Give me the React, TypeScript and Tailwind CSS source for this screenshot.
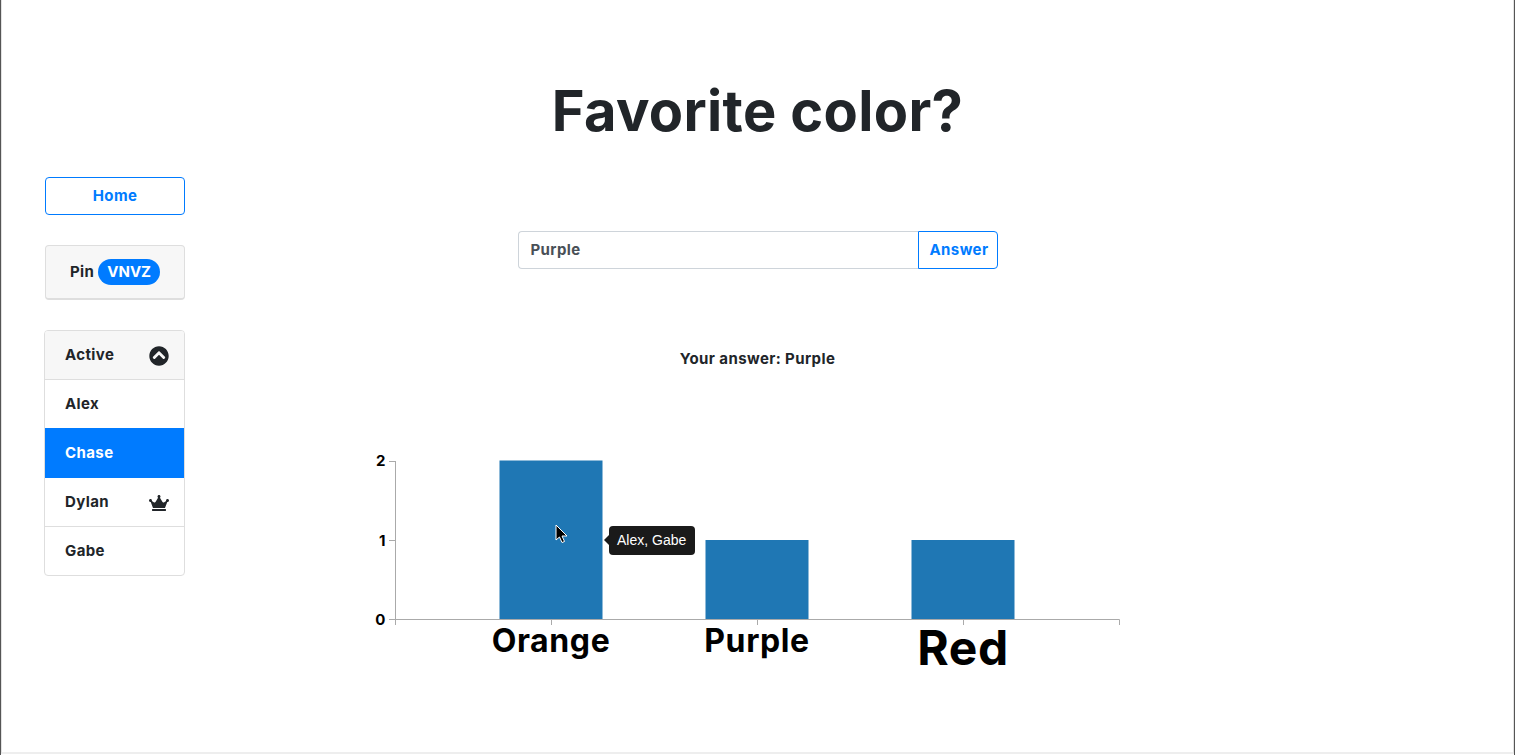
import { FaChevronCircleUp, FaCrown } from "react-icons/fa";

const font = { fontFamily: "Inter, 'Liberation Sans', sans-serif" };

const players = [
  { name: "Alex", rowClass: "h-[48px]" },
  { name: "Chase", rowClass: "h-[50px] bg-[#007bff] text-white" },
  { name: "Dylan", host: true, rowClass: "h-[49px] border-b border-[#dedede]" },
  { name: "Gabe", rowClass: "h-[48px]" },
];

function Chart() {
  const bars = [
    { x: 499.5, y: 460.5, h: 158.5 },
    { x: 705.5, y: 540, h: 79 },
    { x: 911.5, y: 540, h: 79 },
  ];
  return (
    <svg width="800" height="240" viewBox="360 445 800 240" className="block font-bold tracking-[0.6px]" style={font}>
      {bars.map((b) => (
        <rect key={b.x} x={b.x} y={b.y} width="103" height={b.h} fill="#1f77b4" />
      ))}
      <path d="M395.5 461V625M389 461.5H395.5M389 540.5H395.5M389 619.5H1119.5V625M551.5 620V625M757.5 620V625M963.5 620V625" fill="none" stroke="#aaa" />
      <text x="386" y="466" textAnchor="end" fontSize="15" fill="#000">2</text>
      <text x="386" y="546" textAnchor="end" fontSize="15" fill="#000">1</text>
      <text x="386" y="625" textAnchor="end" fontSize="15" fill="#000">0</text>
      <text x="551" y="652" textAnchor="middle" fontSize="32" fill="#000">Orange</text>
      <text x="757" y="652" textAnchor="middle" fontSize="32" fill="#000">Purple</text>
      <text x="963" y="665" textAnchor="middle" fontSize="48" fill="#000">Red</text>
    </svg>
  );
}

export default function App() {
  return (
    <div className="h-[755px] overflow-hidden border-x border-x-[#555]">
      <div className="h-[754px] bg-white border-x border-x-[#e2e2e2] border-b-2 border-b-[#eeeeee] text-[#212529] font-bold text-[15px] tracking-[0.4px]" style={font}>
        <h1 className="pt-[78px] text-center text-[56px] leading-[67px] font-bold tracking-[0.35px]">Favorite color?</h1>
        <div className="mt-[32px] grid grid-cols-[183px_1fr_183px]">
          <div className="pl-[42px]">
            <div className="ml-[1px] h-[38px] flex items-center justify-center rounded border border-[#007bff] text-[#007bff]">Home</div>
            <div className="ml-[1px] mt-[30px] h-[55px] flex items-center justify-center gap-1 rounded border border-b-2 border-[#dedede] bg-[#f7f7f7]">
              <span>Pin</span>
              <span className="h-[26px] px-[9px] flex items-center rounded-full bg-[#007bff] text-white tracking-normal">VNVZ</span>
            </div>
            <div className="mt-[30px] rounded border border-[#dedede] overflow-hidden">
              <div className="h-[49px] pl-5 pr-[15px] flex items-center justify-between bg-[#f7f7f7] border-b border-[#dedede]">
                <span>Active</span>
                <FaChevronCircleUp size={20} className="mt-px" />
              </div>
              {players.map((p) => (
                <div key={p.name} className={`pl-5 pr-[15px] flex items-center justify-between ${p.rowClass}`}>
                  <span>{p.name}</span>
                  {p.host && <FaCrown size={20} className="mt-px" />}
                </div>
              ))}
            </div>
          </div>
          <div className="relative flex flex-col items-center">
            <div className="mt-[54px] flex w-[480px] h-[38px]">
              <div className="flex-1 flex items-center px-3 rounded-l border border-r-0 border-[#ced4da] text-[#495057]">Purple</div>
              <div className="w-[80px] flex items-center pl-[11px] rounded-r border border-[#007bff] text-[#007bff]">Answer</div>
            </div>
            <p className="mt-[80px] leading-[20px]">Your answer: Purple</p>
            <div className="mt-[76px] ml-[4px]">
              <Chart />
            </div>
            <div className="absolute left-[424px] top-[349px] h-[29px] pl-2 pr-[9px] flex items-center rounded bg-[#1a1a1a] text-white text-[14px] font-normal tracking-normal" style={{ fontFamily: "'Liberation Sans', sans-serif" }}>
              Alex, Gabe
              <span className="absolute -left-[5px] top-[9px] w-0 h-0 border-y-[5px] border-r-[5px] border-y-transparent border-r-[#1a1a1a]" />
            </div>
            <svg width="14" height="20" viewBox="0 0 14 20" className="absolute left-[370px] top-[347px]">
              <path d="M1 1V16L4.5 13L7 18.5L9.5 17.5L7 12H12Z" fill="#000" stroke="#fff" strokeWidth="1" />
            </svg>
          </div>
          <div />
        </div>
      </div>
    </div>
  );
}
